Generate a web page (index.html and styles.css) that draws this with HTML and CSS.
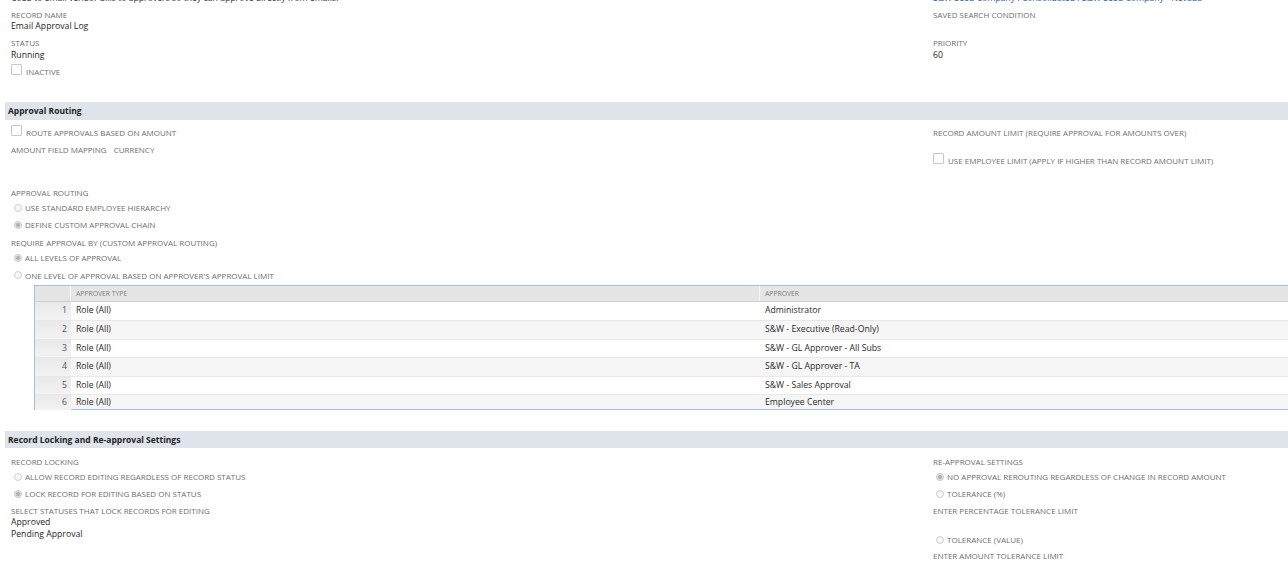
FILE: index.html
```html
<!DOCTYPE html>
<html>
<head>
<meta charset="utf-8">
<link rel="stylesheet" href="styles.css">
</head>
<body>
<div class="page">
  <div class="cols intro">
    <div class="intro-text">Used to email vendor bills to approvers so they can approve directly from emails.</div>
    <div class="intro-link">S&amp;W Seed Company : Consolidated : S&amp;W Seed Company - Nevada</div>
  </div>

  <div class="cols top">
    <div class="col">
      <div class="label m-first">RECORD NAME</div>
      <div class="value v-top">Email Approval Log</div>
      <div class="label m5">STATUS</div>
      <div class="value v-top2">Running</div>
      <div class="check m3"><span class="box"></span><span class="ctext">INACTIVE</span></div>
    </div>
    <div class="col">
      <div class="label m-first">SAVED SEARCH CONDITION</div>
      <div class="value v-top"></div>
      <div class="label m5">PRIORITY</div>
      <div class="value v-top2">60</div>
    </div>
  </div>

  <div class="section s1"><span>Approval Routing</span></div>
  <div class="cols">
    <div class="col">
      <div class="check m5"><span class="box"></span><span class="ctext">ROUTE APPROVALS BASED ON AMOUNT</span></div>
      <div class="label m8">AMOUNT FIELD MAPPING<span class="gap"></span>CURRENCY</div>
      <div class="label m32">APPROVAL ROUTING</div>
      <div class="radio m4"><span class="dot"></span><span class="rtext">USE STANDARD EMPLOYEE HIERARCHY</span></div>
      <div class="radio m6"><span class="dot on"></span><span class="rtext">DEFINE CUSTOM APPROVAL CHAIN</span></div>
      <div class="label m6b">REQUIRE APPROVAL BY (CUSTOM APPROVAL ROUTING)</div>
      <div class="radio m4"><span class="dot on"></span><span class="rtext">ALL LEVELS OF APPROVAL</span></div>
      <div class="radio m6"><span class="dot"></span><span class="rtext">ONE LEVEL OF APPROVAL BASED ON APPROVER'S APPROVAL LIMIT</span></div>
    </div>
    <div class="col">
      <div class="label m7">RECORD AMOUNT LIMIT (REQUIRE APPROVAL FOR AMOUNTS OVER)</div>
      <div class="check m15"><span class="box"></span><span class="ctext">USE EMPLOYEE LIMIT (APPLY IF HIGHER THAN RECORD AMOUNT LIMIT)</span></div>
    </div>
  </div>

  <div class="grid-wrap">
    <div class="grid">
      <div class="grow head">
        <div class="c-num"></div>
        <div class="c-type">APPROVER TYPE</div>
        <div class="c-appr">APPROVER</div>
      </div>
      <div class="grow"><div class="c-num">1</div><div class="c-type">Role (All)</div><div class="c-appr">Administrator</div></div>
      <div class="grow alt"><div class="c-num">2</div><div class="c-type">Role (All)</div><div class="c-appr">S&amp;W - Executive (Read-Only)</div></div>
      <div class="grow"><div class="c-num">3</div><div class="c-type">Role (All)</div><div class="c-appr">S&amp;W - GL Approver - All Subs</div></div>
      <div class="grow alt"><div class="c-num">4</div><div class="c-type">Role (All)</div><div class="c-appr">S&amp;W - GL Approver - TA</div></div>
      <div class="grow"><div class="c-num">5</div><div class="c-type">Role (All)</div><div class="c-appr">S&amp;W - Sales Approval</div></div>
      <div class="grow alt last"><div class="c-num">6</div><div class="c-type">Role (All)</div><div class="c-appr">Employee Center</div></div>
    </div>
  </div>

  <div class="section s2"><span>Record Locking and Re-approval Settings</span></div>
  <div class="cols">
    <div class="col">
      <div class="label m8">RECORD LOCKING</div>
      <div class="radio m4"><span class="dot"></span><span class="rtext">ALLOW RECORD EDITING REGARDLESS OF RECORD STATUS</span></div>
      <div class="radio m6"><span class="dot on"></span><span class="rtext">LOCK RECORD FOR EDITING BASED ON STATUS</span></div>
      <div class="label m5">SELECT STATUSES THAT LOCK RECORDS FOR EDITING</div>
      <div class="value v-top2">Approved</div>
      <div class="value v-next">Pending Approval</div>
    </div>
    <div class="col">
      <div class="label m8">RE-APPROVAL SETTINGS</div>
      <div class="radio m4"><span class="dot on"></span><span class="rtext">NO APPROVAL REROUTING REGARDLESS OF CHANGE IN RECORD AMOUNT</span></div>
      <div class="radio m6"><span class="dot"></span><span class="rtext">TOLERANCE (%)</span></div>
      <div class="label m5">ENTER PERCENTAGE TOLERANCE LIMIT</div>
      <div class="radio m19"><span class="dot"></span><span class="rtext">TOLERANCE (VALUE)</span></div>
      <div class="label m4b">ENTER AMOUNT TOLERANCE LIMIT</div>
    </div>
  </div>
</div>
</body>
</html>
```

FILE: styles.css
```css
html, body {
  margin: 0;
  padding: 0;
  background: #ffffff;
  overflow: hidden;
}
body {
  font-family: "Open Sans", "Liberation Sans", sans-serif;
  font-size: 8.7px;
  color: #1f1f1f;
}
.page {
  width: 1288px;
  height: 578px;
  overflow: hidden;
}
.cols {
  display: grid;
  grid-template-columns: 922px 1fr;
  padding-left: 11px;
}
.col {
  display: flex;
  flex-direction: column;
  align-items: flex-start;
}
.intro {
  margin-top: -7px;
  line-height: 11px;
  height: 11px;
}
.intro-text { color: #333333; }
.intro-link { color: #2a5aa6; }

.label {
  font-size: 8px;
  line-height: 11px;
  height: 11px;
  color: #6e6e6e;
  white-space: nowrap;
}
.value {
  line-height: 11px;
  height: 11px;
  color: #1f1f1f;
  white-space: nowrap;
}
.v-top { margin-top: 1px; }
.v-top2 { margin-top: 1.5px; }
.v-next { margin-top: 1px; }
.gap { display: inline-block; width: 7px; }

.m-first { margin-top: 5px; }
.m3 { margin-top: 3px; }
.m4 { margin-top: 4px; }
.m4b { margin-top: 4.5px; }
.m5 { margin-top: 5.3px; }
.m6 { margin-top: 6.3px; }
.m6b { margin-top: 7px; }
.m7 { margin-top: 7px; }
.m8 { margin-top: 8px; }
.m15 { margin-top: 15px; }
.m19 { margin-top: 18.5px; }
.m32 { margin-top: 32px; }

.check {
  display: flex;
  align-items: flex-start;
  height: 11px;
}
.box {
  width: 11px;
  height: 11px;
  box-sizing: border-box;
  border: 1px solid #c8c8c8;
  border-radius: 1px;
  background: #ffffff;
  flex: none;
}
.ctext {
  font-size: 8px;
  line-height: 11px;
  margin-top: 2px;
  margin-left: 4px;
  color: #6e6e6e;
  white-space: nowrap;
}

.radio {
  display: flex;
  align-items: center;
  height: 11px;
  padding-left: 3px;
}
.dot {
  width: 8px;
  height: 8px;
  box-sizing: border-box;
  border: 1px solid #d0d0d0;
  border-radius: 50%;
  background: #f7f7f7;
  flex: none;
}
.dot.on {
  background: radial-gradient(circle, #a9a9a9 0, #b8b8b8 1.8px, #e6e6e6 2.6px, #f4f4f4 100%);
  border-color: #c8c8c8;
}
.rtext {
  font-size: 8px;
  line-height: 11px;
  margin-left: 3px;
  color: #6e6e6e;
  white-space: nowrap;
}

.section {
  margin-left: 5px;
  height: 18px;
  line-height: 18px;
  background: #dfe4ea;
  padding-left: 3px;
  font-weight: 700;
  font-size: 8.5px;
  color: #222222;
}
.s1 { margin-top: 27px; }
.s2 { margin-top: 21px; height: 17px; line-height: 17px; }

.grid-wrap {
  margin-top: 4px;
  padding-left: 34px;
}
.grid {
  width: 1300px;
  border: 1px solid #a7c0e2;
  border-right: none;
}
.grow {
  display: grid;
  grid-template-columns: 36px 689px 1fr;
  height: 18.5px;
  line-height: 17.5px;
  border-top: 1px solid #e8e8e8;
  box-sizing: border-box;
  background: #ffffff;
}
.grow.alt { background: #f6f6f6; }
.grow.last { height: 15px; line-height: 15px; }
.grow.head {
  height: 16px;
  line-height: 15px;
  border-top: none;
  background: #e5e5e5;
  border-bottom: 1px solid #cfcfcf;
  font-size: 6.8px;
  color: #7c7c7c;
}
.grow.head + .grow { border-top: none; }
.head .c-num, .head .c-type { border-right: 1px solid #f8f8f8; }
.head .c-num { background: #e5e5e5; }
.c-num {
  text-align: right;
  padding-right: 4px;
  color: #555555;
  background: linear-gradient(#e9e9e9, #f3f3f3);
  box-sizing: border-box;
}
.c-type, .c-appr {
  padding-left: 5px;
  white-space: nowrap;
  color: #2a2a2a;
}
.head .c-type, .head .c-appr { color: #7c7c7c; }
```
